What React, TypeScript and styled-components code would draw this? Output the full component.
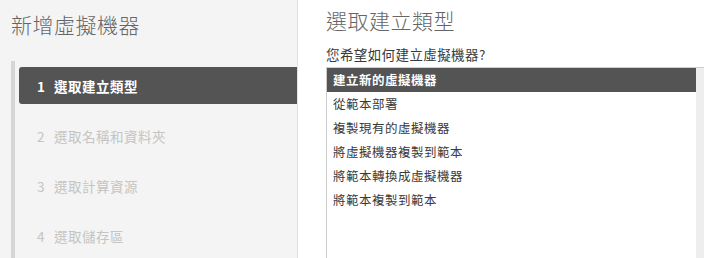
import React from "react";
import styled, { createGlobalStyle } from "styled-components";

const GlobalStyle = createGlobalStyle`
  html, body { margin: 0; padding: 0; background: #ffffff; }
  body { font-family: "Noto Sans CJK TC", "Noto Sans", "Liberation Sans", sans-serif; }
  * { box-sizing: border-box; }
`;

const Frame = styled.div`
  display: flex;
  width: 704px;
  height: 258px;
  overflow: hidden;
`;

const Sidebar = styled.aside`
  display: flex;
  flex-direction: column;
  width: 298px;
  flex-shrink: 0;
  background: #f4f4f4;
  border-right: 1px solid #e2e2e2;
  padding-top: 10px;
`;

const SideTitle = styled.h1`
  margin: 0 0 23px 11px;
  font-size: 21px;
  line-height: 28px;
  font-weight: 300;
  color: #666666;
  letter-spacing: 0.5px;
`;

const Steps = styled.ol`
  flex: 1;
  display: flex;
  flex-direction: column;
  gap: 13px;
  list-style: none;
  margin: 0 0 0 11px;
  padding: 6px 0 0 0;
  border-left: 4px solid #d6d6d6;
`;

const Step = styled.li<{ $active?: boolean }>`
  display: flex;
  align-items: center;
  height: 37px;
  margin-left: 4px;
  padding-left: 18px;
  border-radius: 3px 0 0 3px;
  background: ${(p) => (p.$active ? "#545454" : "transparent")};
  color: ${(p) => (p.$active ? "#ffffff" : "#c4c4c4")};
  font-weight: ${(p) => (p.$active ? 700 : 400)};
  font-size: 13.5px;
  letter-spacing: 0.5px;
`;

const StepNum = styled.span`
  width: 17px;
  flex-shrink: 0;
`;

const Main = styled.main`
  flex: 1;
  display: flex;
  flex-direction: column;
  padding: 6px 0 0 28px;
  min-width: 0;
`;

const MainTitle = styled.h2`
  margin: 0 0 11px 0;
  font-size: 21px;
  line-height: 28px;
  font-weight: 300;
  color: #666666;
  letter-spacing: 0.5px;
`;

const Prompt = styled.div`
  margin: 0 0 4px 0;
  font-size: 13.5px;
  line-height: 18px;
  color: #3a3a3a;
  letter-spacing: 0.4px;
`;

const ListBox = styled.div`
  flex: 1;
  display: flex;
  border-top: 1px solid #cccccc;
  border-left: 1px solid #cccccc;
  background: #ffffff;
`;

const Options = styled.ul`
  flex: 1;
  list-style: none;
  margin: 0;
  padding: 0;
`;

const Option = styled.li<{ $selected?: boolean }>`
  height: 24px;
  line-height: 24px;
  padding-left: 6px;
  font-size: 12.5px;
  letter-spacing: 0.5px;
  background: ${(p) => (p.$selected ? "#545454" : "transparent")};
  color: ${(p) => (p.$selected ? "#ffffff" : "#3a3a3a")};
  font-weight: ${(p) => (p.$selected ? 700 : 400)};
`;

const Track = styled.div`
  width: 8px;
  flex-shrink: 0;
  background: #eeeeee;
`;

const steps = ["選取建立類型", "選取名稱和資料夾", "選取計算資源", "選取儲存區"];
const options = [
  "建立新的虛擬機器",
  "從範本部署",
  "複製現有的虛擬機器",
  "將虛擬機器複製到範本",
  "將範本轉換成虛擬機器",
  "將範本複製到範本",
];

export default function App() {
  return (
    <>
      <GlobalStyle />
      <Frame>
        <Sidebar>
          <SideTitle>新增虛擬機器</SideTitle>
          <Steps>
            {steps.map((s, i) => (
              <Step key={s} $active={i === 0}>
                <StepNum>{i + 1}</StepNum>
                {s}
              </Step>
            ))}
          </Steps>
        </Sidebar>
        <Main>
          <MainTitle>選取建立類型</MainTitle>
          <Prompt>您希望如何建立虛擬機器?</Prompt>
          <ListBox>
            <Options>
              {options.map((o, i) => (
                <Option key={o} $selected={i === 0}>
                  {o}
                </Option>
              ))}
            </Options>
            <Track />
          </ListBox>
        </Main>
      </Frame>
    </>
  );
}
